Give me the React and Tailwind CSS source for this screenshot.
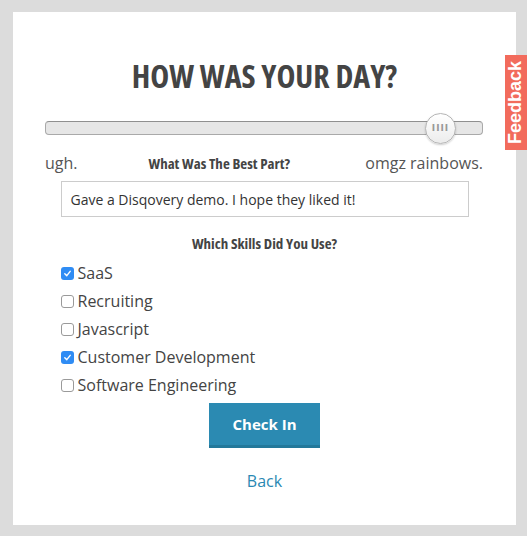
const skills = [
    { label: 'SaaS', checked: true },
    { label: 'Recruiting', checked: false },
    { label: 'Javascript', checked: false },
    { label: 'Customer Development', checked: true },
    { label: 'Software Engineering', checked: false },
];

function Casilla({ checked }) {
    if (checked) {
        return (
            <span className="flex h-[13px] w-[13px] items-center justify-center rounded-[3px] bg-[#2f8cf4]">
                <svg width="9" height="9" viewBox="0 0 10 10" fill="none">
                    <path d="M2 5.2 L4.2 7.4 L8 2.6" stroke="white" strokeWidth="1.6" strokeLinecap="round" strokeLinejoin="round" />
                </svg>
            </span>
        );
    }
    return <span className="h-[13px] w-[13px] rounded-[3px] border border-[#9a9a9a] bg-white" />;
}

export default function App() {
    return (
        <div className="relative min-h-[536px] w-[527px] bg-[#dcdcdc] pt-[12px] font-['Open_Sans',sans-serif]">
            <div className="ml-[13px] flex h-[513px] w-[503px] flex-col items-center bg-white">
                <h1 className="mt-[44px] text-[32px] font-bold leading-[40px] text-[#444] [font-stretch:condensed]">
                    HOW WAS YOUR DAY?
                </h1>

                <div className="relative mt-[25px] ml-[32px] h-[14px] w-[438px] self-start rounded-[4px] border border-[#a9a9a9] border-t-[#8f8f8f] bg-[#e6e6e6]">
                    <div className="absolute left-[379px] top-[-9px] flex h-[31px] w-[31px] items-center justify-center rounded-full border border-[#b5b5b5] bg-gradient-to-b from-white to-[#ececec] shadow-[0_1px_2px_rgba(0,0,0,0.2)]">
                        <span className="font-['DejaVu_Sans',sans-serif] text-[9px] font-bold leading-none tracking-[1px] text-[#999]">IIII</span>
                    </div>
                </div>

                <div className="mt-[18px] ml-[32px] flex w-[438px] items-center self-start text-[16px] leading-[20px] text-[#555]">
                    <span>ugh.</span>
                    <span className="ml-[71px] text-[15px] font-bold text-[#444] [font-stretch:condensed]">What Was The Best Part?</span>
                    <span className="ml-auto">omgz rainbows.</span>
                </div>

                <div className="mt-[8px] flex h-[36px] w-[408px] items-center border border-[#cccccc] px-[9px] text-[14px] text-[#333]">
                    Gave a Disqovery demo. I hope they liked it!
                </div>

                <div className="mt-[16px] text-[15px] font-bold leading-[20px] text-[#444] [font-stretch:condensed]">
                    Which Skills Did You Use?
                </div>

                <div className="mt-[6px] flex w-[408px] flex-col">
                    {skills.map((s) => (
                        <label key={s.label} className="flex h-[28px] items-center gap-[4px] text-[16px] text-[#444]">
                            <Casilla checked={s.checked} />
                            <span>{s.label}</span>
                        </label>
                    ))}
                </div>

                <button className="mt-[4px] h-[45px] w-[111px] border-b-[3px] border-[#23789a] bg-[#2b8ab2] text-[15px] font-bold text-white">
                    Check In
                </button>

                <a className="mt-[21px] text-[16px] text-[#2a88b3]">Back</a>
            </div>

            <div className="absolute left-[505px] top-[55px] flex h-[95px] w-[22px] items-center justify-center bg-[#f26b5c]">
                <span className="-rotate-90 whitespace-nowrap font-['Liberation_Sans',sans-serif] text-[18px] font-bold text-white">
                    Feedback
                </span>
            </div>
        </div>
    );
}
